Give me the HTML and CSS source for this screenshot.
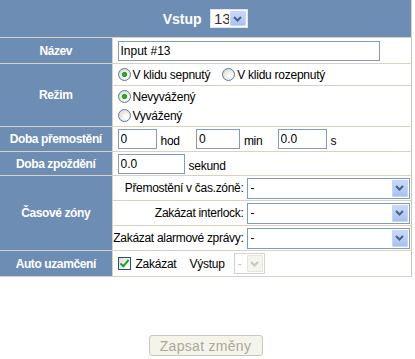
FILE: index.html
```html
<!DOCTYPE html>
<html lang="cs">
<head>
<meta charset="utf-8">
<title>Vstup</title>
<link rel="stylesheet" href="styles.css">
</head>
<body>
<form class="page">
<table class="form">
  <colgroup><col class="c-lbl"><col class="c-val"></colgroup>
  <tr class="row-head">
    <th colspan="2" class="head">
      <span class="head-title">Vstup</span>
      <span class="sel sel-head">
        <select><option>13</option></select>
        <span class="arrow"><svg width="9" height="6" viewBox="0 0 9 6"><polyline points="1,1 4.5,4.5 8,1" fill="none" stroke="#4d6185" stroke-width="2"/></svg></span>
      </span>
    </th>
  </tr>
  <tr class="row-name">
    <th class="lbl">Název</th>
    <td class="val"><input class="txt txt-name" type="text" value="Input #13"></td>
  </tr>
  <tr class="row-mode1">
    <th class="lbl" rowspan="2">Režim</th>
    <td class="val">
      <label class="opt"><input type="radio" name="klid" checked>V klidu sepnutý</label>
      <label class="opt opt-gap"><input type="radio" name="klid">V klidu rozepnutý</label>
    </td>
  </tr>
  <tr class="row-mode2">
    <td class="val stack">
      <label class="opt"><input type="radio" name="vaz" checked>Nevyvážený</label>
      <label class="opt"><input type="radio" name="vaz">Vyvážený</label>
    </td>
  </tr>
  <tr class="row-bypass">
    <th class="lbl">Doba přemostění</th>
    <td class="val">
      <input class="txt txt-h" type="text" value="0"><span class="unit unit-h">hod</span>
      <input class="txt txt-m" type="text" value="0"><span class="unit unit-m">min</span>
      <input class="txt txt-s" type="text" value="0.0"><span class="unit">s</span>
    </td>
  </tr>
  <tr class="row-delay">
    <th class="lbl">Doba zpoždění</th>
    <td class="val">
      <input class="txt txt-d" type="text" value="0.0"><span class="unit">sekund</span>
    </td>
  </tr>
  <tr class="row-zone">
    <th class="lbl" rowspan="3">Časové zóny</th>
    <td class="zone-cell">
      <div class="zone">
        <span class="zone-lbl">Přemostění v čas.zóně:</span>
        <span class="sel sel-zone"><select><option>-</option></select><span class="arrow"><svg width="9" height="6" viewBox="0 0 9 6"><polyline points="1,1 4.5,4.5 8,1" fill="none" stroke="#4d6185" stroke-width="2"/></svg></span></span>
      </div>
    </td>
  </tr>
  <tr class="row-zone">
    <td class="zone-cell">
      <div class="zone">
        <span class="zone-lbl">Zakázat interlock:</span>
        <span class="sel sel-zone"><select><option>-</option></select><span class="arrow"><svg width="9" height="6" viewBox="0 0 9 6"><polyline points="1,1 4.5,4.5 8,1" fill="none" stroke="#4d6185" stroke-width="2"/></svg></span></span>
      </div>
    </td>
  </tr>
  <tr class="row-zone">
    <td class="zone-cell">
      <div class="zone">
        <span class="zone-lbl">Zakázat alarmové zprávy:</span>
        <span class="sel sel-zone"><select><option>-</option></select><span class="arrow"><svg width="9" height="6" viewBox="0 0 9 6"><polyline points="1,1 4.5,4.5 8,1" fill="none" stroke="#4d6185" stroke-width="2"/></svg></span></span>
      </div>
    </td>
  </tr>
  <tr class="row-auto">
    <th class="lbl">Auto uzamčení</th>
    <td class="val">
      <label class="opt"><input class="chk" type="checkbox" checked>Zakázat</label>
      <span class="unit unit-out">Výstup</span>
      <span class="sel sel-off"><select disabled><option>-</option></select><span class="arrow"><svg width="9" height="6" viewBox="0 0 9 6"><polyline points="1,1 4.5,4.5 8,1" fill="none" stroke="#c9c7ba" stroke-width="2"/></svg></span></span>
    </td>
  </tr>
</table>
<div class="actions">
  <button type="button" class="btn" disabled>Zapsat změny</button>
</div>
</form>
</body>
</html>
```

FILE: styles.css
```css
html, body {
  margin: 0;
  padding: 0;
  background: #ffffff;
}

body {
  font-family: "Liberation Sans", Arial, sans-serif;
  font-size: 12px;
  color: #000;
}

.form {
  width: 411px;
  border-collapse: collapse;
  table-layout: fixed;
}

.c-lbl { width: 112px; }
.c-val { width: 299px; }

.form th,
.form td {
  border: 1px solid #d8d2c0;
  padding: 0;
  overflow: hidden;
}

.form tr:first-child th {
  border-top: none;
}

.form th:first-child {
  border-left: none;
}

.form td {
  border-right: 1px solid #c8c4b6;
}

.head {
  background: #6e8db4;
  color: #fff;
  height: 37px;
  text-align: center;
  vertical-align: middle;
  white-space: nowrap;
}

.head-title {
  font-size: 14px;
  font-weight: bold;
  vertical-align: middle;
  margin-right: 5px;
}

.lbl {
  background: #6e8db4;
  color: #fff;
  font-size: 12px;
  letter-spacing: -0.4px;
  font-weight: bold;
  text-align: center;
  vertical-align: middle;
  white-space: nowrap;
}

.val {
  background: #fff;
  padding-left: 5px !important;
  white-space: nowrap;
  vertical-align: middle;
  letter-spacing: -0.25px;
}

.row-name { height: 26px; }
.row-mode1 { height: 22px; }
.row-mode2 { height: 41px; }
.row-bypass { height: 25px; }
.row-delay { height: 24px; }
.row-zone { height: 25px; }
.row-auto { height: 26px; }

.stack .opt {
  display: flex;
  height: 19px;
}

.opt {
  display: inline-flex;
  align-items: center;
  vertical-align: middle;
  font-size: 12px;
  color: #000;
}

.opt-gap {
  margin-left: 9px;
}

.opt input[type="radio"] {
  appearance: none;
  -webkit-appearance: none;
  width: 13px;
  height: 13px;
  margin: 0 2px 0 0;
  border: 1px solid #5a7aa0;
  border-radius: 50%;
  background: radial-gradient(circle at 65% 65%, #ffffff 0, #f0efe9 40%, #d6d4c8 100%);
  box-sizing: border-box;
}

.opt input[type="radio"]:checked {
  background:
    radial-gradient(circle, #36b036 0, #21a121 2.2px, rgba(33,161,33,0) 3px),
    radial-gradient(circle at 65% 65%, #ffffff 0, #f0efe9 40%, #d6d4c8 100%);
}

.opt input.chk {
  appearance: none;
  -webkit-appearance: none;
  position: relative;
  width: 13px;
  height: 13px;
  margin: 0 5px 0 0;
  border: 1px solid #1c5180;
  background: linear-gradient(135deg, #dcdcd6 0, #f4f4f0 60%, #ffffff 100%);
  box-sizing: border-box;
}

.opt input.chk:checked::after {
  content: "";
  position: absolute;
  left: 3px;
  top: 0px;
  width: 3px;
  height: 7px;
  border-right: 2px solid #21a121;
  border-bottom: 2px solid #21a121;
  transform: rotate(40deg);
}

.txt {
  box-sizing: border-box;
  height: 20px;
  border: 1px solid #7f9db9;
  padding: 0 2px;
  font-family: "Liberation Sans", Arial, sans-serif;
  font-size: 12px;
  color: #000;
  vertical-align: middle;
  margin: 0;
}

.txt-name { width: 262px; }
.txt-h { width: 39px; }
.txt-m { width: 44px; }
.txt-s { width: 49px; }
.txt-d { width: 67px; }

.unit {
  display: inline-block;
  vertical-align: middle;
  margin-left: 4px;
  font-size: 12px;
  position: relative;
  top: 2px;
}

.unit-h { margin-right: 13px; }
.unit-m { margin-right: 12px; }

.unit-out {
  top: 0;
  margin-left: 10px;
  margin-right: 6px;
}

.sel {
  display: inline-flex;
  align-items: stretch;
  box-sizing: border-box;
  border: 1px solid #7f9db9;
  background: #fff;
  vertical-align: middle;
}

.sel select {
  appearance: none;
  -webkit-appearance: none;
  border: none;
  background: transparent;
  font-family: "Liberation Sans", Arial, sans-serif;
  font-size: 12px;
  color: #000;
  padding: 0 0 0 3px;
  margin: 0;
  outline: none;
  flex: 1;
  min-width: 0;
}

.sel .arrow {
  display: flex;
  align-items: center;
  justify-content: center;
  width: 16px;
  margin: 1px;
  background: linear-gradient(180deg, #c8d8fb 0, #b6cbf6 60%, #a9c0f0 100%);
  border: 1px solid #c5d5f6;
  box-sizing: border-box;
  border-radius: 1px;
}

.sel-head {
  width: 38px;
  height: 19px;
  border-color: #dfe5ee;
}

.sel-head select {
  font-size: 15px;
  color: #333;
  padding-left: 3px;
}

.zone-cell {
  background: #fff;
  vertical-align: middle;
}

.zone {
  display: grid;
  grid-template-columns: 131px 163px;
  column-gap: 3px;
  align-items: center;
}

.zone-lbl {
  text-align: right;
  font-size: 12px;
  letter-spacing: -0.3px;
  white-space: nowrap;
}

.sel-zone {
  height: 21px;
  width: 163px;
}

.sel-off {
  width: 31px;
  height: 21px;
  border-color: #d6d4ca;
}

.sel-off select {
  color: #aca899;
  background: #fff;
}

.sel-off .arrow {
  background: #f4f4f0;
  border-color: #e6e4dc;
}

.actions {
  width: 411px;
  padding-top: 58px;
  text-align: center;
}

.btn {
  box-sizing: border-box;
  width: 114px;
  height: 21px;
  border: 1px solid #c9c7ba;
  border-radius: 3px;
  background: #f5f4ea;
  color: #aca899;
  font-family: "Liberation Sans", Arial, sans-serif;
  font-size: 14px;
  padding: 0;
  letter-spacing: 0.3px;
}
```
